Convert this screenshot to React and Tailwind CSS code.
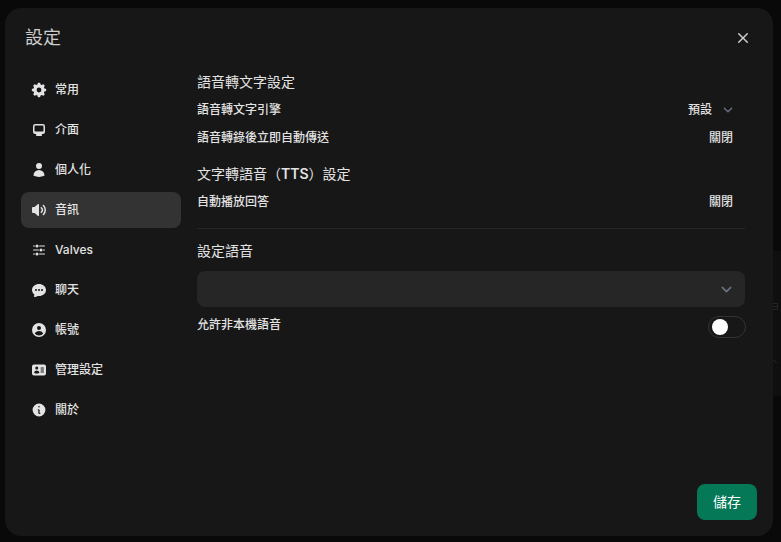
import React, { useState } from 'react';

const tabs = [
  {
    id: 'general',
    label: '常用',
    viewBox: '0 0 20 20',
    path: 'M8.34 1.804A1 1 0 019.32 1h1.36a1 1 0 01.98.804l.295 1.473c.497.144.971.342 1.416.587l1.25-.834a1 1 0 011.262.125l.962.962a1 1 0 01.125 1.262l-.834 1.25c.245.445.443.919.587 1.416l1.473.294a1 1 0 01.804.98v1.361a1 1 0 01-.804.98l-1.473.295a6.95 6.95 0 01-.587 1.416l.834 1.25a1 1 0 01-.125 1.262l-.962.962a1 1 0 01-1.262.125l-1.25-.834a6.953 6.953 0 01-1.416.587l-.294 1.473a1 1 0 01-.98.804H9.32a1 1 0 01-.98-.804l-.295-1.473a6.957 6.957 0 01-1.416-.587l-1.25.834a1 1 0 01-1.262-.125l-.962-.962a1 1 0 01-.125-1.262l.834-1.25a6.957 6.957 0 01-.587-1.416l-1.473-.294A1 1 0 011 10.68V9.32a1 1 0 01.804-.98l1.473-.295c.144-.497.342-.971.587-1.416l-.834-1.25a1 1 0 01.125-1.262l.962-.962A1 1 0 015.38 3.03l1.25.834a6.957 6.957 0 011.416-.587l.294-1.473zM13 10a3 3 0 11-6 0 3 3 0 016 0z',
  },
  {
    id: 'interface',
    label: '介面',
    viewBox: '0 0 16 16',
    path: 'M2 4.25A2.25 2.25 0 0 1 4.25 2h7.5A2.25 2.25 0 0 1 14 4.25v5.5A2.25 2.25 0 0 1 11.75 12h-1.312c.1.128.21.248.328.36a.75.75 0 0 1 .234.545v.345a.75.75 0 0 1-.75.75h-4.5a.75.75 0 0 1-.75-.75v-.345a.75.75 0 0 1 .234-.545c.118-.111.228-.232.328-.36H4.25A2.25 2.25 0 0 1 2 9.75v-5.5Zm2.25-.75a.75.75 0 0 0-.75.75v4.5c0 .414.336.75.75.75h7.5a.75.75 0 0 0 .75-.75v-4.5a.75.75 0 0 0-.75-.75h-7.5Z',
  },
  {
    id: 'personalization',
    label: '個人化',
    viewBox: '0 0 24 24',
    path: 'M7.5 6a4.5 4.5 0 1 1 9 0 4.5 4.5 0 0 1-9 0ZM3.751 20.105a8.25 8.25 0 0 1 16.498 0 .75.75 0 0 1-.437.695A18.683 18.683 0 0 1 12 22.5c-2.786 0-5.433-.608-7.812-1.7a.75.75 0 0 1-.437-.695Z',
  },
  {
    id: 'audio',
    label: '音訊',
    viewBox: '0 0 16 16',
    path: 'M7.557 2.066A.75.75 0 0 1 8 2.75v10.5a.75.75 0 0 1-1.248.56L3.59 11H2a1 1 0 0 1-1-1V6a1 1 0 0 1 1-1h1.59l3.162-2.81a.75.75 0 0 1 .805-.124ZM12.95 3.05a.75.75 0 1 0-1.06 1.06 5.5 5.5 0 0 1 0 7.78.75.75 0 1 0 1.06 1.06 7 7 0 0 0 0-9.9ZM10.828 5.172a.75.75 0 1 0-1.06 1.06 2.5 2.5 0 0 1 0 3.536.75.75 0 1 0 1.06 1.06 4 4 0 0 0 0-5.656Z',
  },
  {
    id: 'valves',
    label: 'Valves',
    viewBox: '0 0 24 24',
    path: 'M18.75 12.75h1.5a.75.75 0 0 0 0-1.5h-1.5a.75.75 0 0 0 0 1.5ZM12 6a.75.75 0 0 1 .75-.75h7.5a.75.75 0 0 1 0 1.5h-7.5A.75.75 0 0 1 12 6ZM12 18a.75.75 0 0 1 .75-.75h7.5a.75.75 0 0 1 0 1.5h-7.5A.75.75 0 0 1 12 18ZM3.75 6.75h1.5a.75.75 0 1 0 0-1.5h-1.5a.75.75 0 0 0 0 1.5ZM5.25 18.75h-1.5a.75.75 0 0 1 0-1.5h1.5a.75.75 0 0 1 0 1.5ZM3 12a.75.75 0 0 1 .75-.75h7.5a.75.75 0 0 1 0 1.5h-7.5A.75.75 0 0 1 3 12ZM9 3.75a2.25 2.25 0 1 0 0 4.5 2.25 2.25 0 0 0 0-4.5ZM12.75 12a2.25 2.25 0 1 1 4.5 0 2.25 2.25 0 0 1-4.5 0ZM9 15.75a2.25 2.25 0 1 0 0 4.5 2.25 2.25 0 0 0 0-4.5Z',
  },
  {
    id: 'chats',
    label: '聊天',
    viewBox: '0 0 16 16',
    path: 'M8 2C4.262 2 1 4.57 1 8c0 1.86.98 3.486 2.455 4.566a3.472 3.472 0 0 1-.469 1.26.75.75 0 0 0 .713 1.14 6.961 6.961 0 0 0 3.06-1.06c.403.062.818.094 1.241.094 3.738 0 7-2.57 7-6s-3.262-6-7-6ZM5 9a1 1 0 1 0 0-2 1 1 0 0 0 0 2Zm7-1a1 1 0 1 1-2 0 1 1 0 0 1 2 0ZM8 9a1 1 0 1 0 0-2 1 1 0 0 0 0 2Z',
  },
  {
    id: 'account',
    label: '帳號',
    viewBox: '0 0 16 16',
    path: 'M15 8A7 7 0 1 1 1 8a7 7 0 0 1 14 0Zm-5-2a2 2 0 1 1-4 0 2 2 0 0 1 4 0ZM8 9c-1.825 0-3.422.977-4.295 2.437A5.49 5.49 0 0 0 8 13.5a5.49 5.49 0 0 0 4.294-2.063A4.997 4.997 0 0 0 8 9Z',
  },
  {
    id: 'admin',
    label: '管理設定',
    viewBox: '0 0 24 24',
    path: 'M4.5 3.75a3 3 0 0 0-3 3v10.5a3 3 0 0 0 3 3h15a3 3 0 0 0 3-3V6.75a3 3 0 0 0-3-3h-15Zm4.125 3a2.25 2.25 0 1 0 0 4.5 2.25 2.25 0 0 0 0-4.5Zm-3.873 8.703a4.126 4.126 0 0 1 7.746 0 .75.75 0 0 1-.351.92 7.47 7.47 0 0 1-3.522.877 7.47 7.47 0 0 1-3.522-.877.75.75 0 0 1-.351-.92ZM15 8.25a.75.75 0 0 0 0 1.5h3.75a.75.75 0 0 0 0-1.5H15ZM14.25 12a.75.75 0 0 1 .75-.75h3.75a.75.75 0 0 1 0 1.5H15a.75.75 0 0 1-.75-.75Zm.75 2.25a.75.75 0 0 0 0 1.5h3.75a.75.75 0 0 0 0-1.5H15Z',
  },
  {
    id: 'about',
    label: '關於',
    viewBox: '0 0 20 20',
    path: 'M18 10a8 8 0 11-16 0 8 8 0 0116 0zm-7-4a1 1 0 11-2 0 1 1 0 012 0zM9 9a.75.75 0 000 1.5h.253a.25.25 0 01.244.304l-.459 2.066A1.75 1.75 0 0010.747 15H11a.75.75 0 000-1.5h-.253a.25.25 0 01-.244-.304l.459-2.066A1.75 1.75 0 009.253 9H9z',
  },
];

const Chevron = ({ className }) => (
  <svg
    aria-hidden="true"
    viewBox="0 0 20 20"
    fill="none"
    stroke="currentColor"
    strokeWidth="1.5"
    strokeLinecap="round"
    strokeLinejoin="round"
    className={`pointer-events-none absolute right-2 text-gray-500 ${className}`}
  >
    <path d="m6 8 4 4 4-4" />
  </svg>
);

const SwitchRow = ({ label, value, onToggle }) => (
  <div className="flex h-7 items-center justify-between text-xs font-medium">
    <span>{label}</span>
    <button type="button" aria-label={label} aria-pressed={value} onClick={onToggle} className="px-3 py-1">
      {value ? '開啟' : '關閉'}
    </button>
  </div>
);

export default function App() {
  const [selectedTab, setSelectedTab] = useState('audio');
  const [autoSend, setAutoSend] = useState(false);
  const [autoPlayback, setAutoPlayback] = useState(false);
  const [nonLocalVoices, setNonLocalVoices] = useState(false);

  return (
    <div className="relative flex min-h-screen bg-[#090909] pt-2 pr-2 pb-1.5 pl-[5px] font-['Inter','Noto_Sans_CJK_TC',sans-serif] text-[#e3e3e3]">
      {/* page content dimmed behind the dialog */}
      <div className="absolute top-[251px] right-0 h-[145px] w-10 bg-[#0f0f0f]">
        <svg aria-hidden="true" viewBox="0 0 40 145" fill="none" stroke="#262626" className="h-full w-full">
          <path d="M30 52.5h6.5v6H30M36.5 55.5H30M32 109l4 3" />
        </svg>
      </div>

      <div role="dialog" aria-labelledby="settings-title" className="relative flex flex-1 flex-col rounded-2xl bg-[#171717]">
        <div className="flex items-center justify-between px-5 pt-4 pb-5">
          <h1 id="settings-title" className="text-lg leading-7 text-[#cdcdcd]">設定</h1>
          <button type="button" aria-label="關閉視窗" className="text-[#cdcdcd]">
            <svg viewBox="0 0 20 20" fill="currentColor" className="h-5 w-5">
              <path d="M6.28 5.22a.75.75 0 00-1.06 1.06L8.94 10l-3.72 3.72a.75.75 0 101.06 1.06L10 11.06l3.72 3.72a.75.75 0 101.06-1.06L11.06 10l3.72-3.72a.75.75 0 00-1.06-1.06L10 8.94 6.28 5.22z" />
            </svg>
          </button>
        </div>

        <div className="flex flex-1 gap-4 px-4 pb-4">
          <nav className="flex w-40 shrink-0 flex-col gap-1 text-xs font-medium">
            {tabs.map((tab) => (
              <button
                key={tab.id}
                type="button"
                onClick={() => setSelectedTab(tab.id)}
                className={`flex h-9 items-center gap-2 rounded-lg px-2.5 text-left ${
                  selectedTab === tab.id ? 'bg-[#333333]' : 'hover:bg-[#262626]'
                }`}
              >
                <svg aria-hidden="true" viewBox={tab.viewBox} fill="currentColor" className="h-4 w-4 shrink-0">
                  <path fillRule="evenodd" clipRule="evenodd" d={tab.path} />
                </svg>
                {tab.label}
              </button>
            ))}
          </nav>

          <form className="flex flex-1 flex-col justify-between" onSubmit={(e) => e.preventDefault()}>
            <div className="pr-3">
              <h2 className="mb-1 text-sm">語音轉文字設定</h2>
              <div className="flex h-7 items-center justify-between text-xs font-medium">
                <label htmlFor="stt-engine">語音轉文字引擎</label>
                <div className="relative flex items-center">
                  <select id="stt-engine" className="appearance-none bg-transparent py-1 pr-8 pl-2">
                    <option>預設</option>
                  </select>
                  <Chevron className="h-[18px] w-[18px]" />
                </div>
              </div>
              <SwitchRow label="語音轉錄後立即自動傳送" value={autoSend} onToggle={() => setAutoSend(!autoSend)} />

              <h2 className="mt-3 mb-1 text-sm">
                文字轉語音（<span className="font-semibold">TTS</span>）設定
              </h2>
              <SwitchRow label="自動播放回答" value={autoPlayback} onToggle={() => setAutoPlayback(!autoPlayback)} />

              <hr className="my-3 border-[#262626]" />

              <label htmlFor="voice" className="mb-2.5 block text-sm">設定語音</label>
              <div className="relative flex items-center">
                <select id="voice" className="h-9 w-full appearance-none rounded-lg bg-[#262626] px-4 text-sm">
                  <option></option>
                </select>
                <Chevron className="h-[21px] w-[21px]" />
              </div>

              <div className="mt-2.5 flex justify-between text-xs font-medium">
                <label htmlFor="nonlocal-voices">允許非本機語音</label>
                <input
                  id="nonlocal-voices"
                  type="checkbox"
                  role="switch"
                  checked={nonLocalVoices}
                  onChange={(e) => setNonLocalVoices(e.target.checked)}
                  className="flex h-5 w-9 cursor-pointer appearance-none items-center rounded-full px-[3px] outline-1 outline-[#333333] before:block before:h-4 before:w-4 before:rounded-full before:bg-white checked:justify-end checked:bg-emerald-600"
                />
              </div>
            </div>

            <div className="flex justify-end">
              <button type="submit" className="h-9 rounded-lg bg-[#047857] px-4 text-sm text-white">
                儲存
              </button>
            </div>
          </form>
        </div>
      </div>
    </div>
  );
}
